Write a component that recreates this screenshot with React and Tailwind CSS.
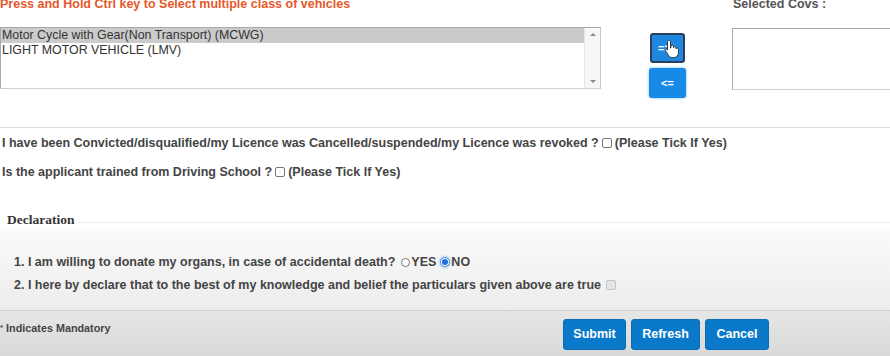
import React from "react";

function Hand() {
  return (
    <svg width="16" height="20" viewBox="0 0 16 20" className="absolute left-[12px] top-[4px]">
      <path
        d="M5 1.5c.9 0 1.5.6 1.5 1.5v6l.4-.1V7.5c0-.8.6-1.3 1.3-1.3s1.3.5 1.3 1.3v1.2c.1-.7.6-1.1 1.3-1.1.7 0 1.2.5 1.2 1.200v1c.2-.5.7-.8 1.2-.8.7 0 1.2.5 1.2 1.2V14c0 2.6-2 4.6-4.6 4.6H8.2c-1.5 0-2.6-.7-3.4-1.9L1.7 12c-.4-.6-.2-1.3.3-1.6.5-.4 1.2-.3 1.6.2l-.1.1L3.5 11V3c0-.9.6-1.5 1.5-1.5z"
        fill="#ffffff"
        stroke="#2b2b2b"
        strokeWidth="0.9"
      />
    </svg>
  );
}

export default function App() {
  return (
    <div
      className="w-[890px] h-[356px] overflow-hidden bg-white text-[#444] flex flex-col"
      style={{ fontFamily: '"Liberation Sans", Arial, sans-serif' }}
    >
      {/* top section */}
      <div className="flex h-[128px] border-b border-[#dcdcdc]">
        <div className="w-[601px] flex flex-col">
          <div className="mt-[-3px] h-[14px] leading-[14px] text-[12.5px] font-bold text-[#e5582b]">
            Press and Hold Ctrl key to Select multiple class of vehicles
          </div>
          <div className="mt-[16px] h-[62px] border border-[#a9a9a9] border-r-[#c8c8c8] border-b-[#d0d0d0] flex bg-white">
            <div className="flex-1 flex flex-col text-[12.4px] leading-[15px] text-[#333]">
              <div className="bg-[#cbcbcb] px-[1px]">Motor Cycle with Gear(Non Transport) (MCWG)</div>
              <div className="px-[1px]">LIGHT MOTOR VEHICLE (LMV)</div>
            </div>
            <div className="w-[16px] border-l border-[#e6e6e6] bg-[#f7f7f7] flex flex-col justify-between items-center py-[5px]">
              <div className="w-0 h-0 border-l-[3px] border-r-[3px] border-b-[3px] border-l-transparent border-r-transparent border-b-[#8a8a8a]" />
              <div className="w-0 h-0 border-l-[3px] border-r-[3px] border-t-[3px] border-l-transparent border-r-transparent border-t-[#8a8a8a]" />
            </div>
          </div>
        </div>
        <div className="ml-[48px] w-[37px] flex flex-col items-center pt-[33px] gap-[5px]">
          <div className="relative w-[35px] h-[30px] rounded-[3px] bg-[#1f87df] border-2 border-[#2d3f5c] flex items-center justify-center text-white text-[11px] font-bold">
            <span className="mr-[6px]">=&gt;</span>
            <Hand />
          </div>
          <div className="w-[37px] h-[30px] rounded-[3px] bg-[#178ae8] shadow-[0_0_3px_#6fc0ff] flex items-center justify-center text-white text-[11px] font-bold">
            &lt;=
          </div>
        </div>
        <div className="ml-[46px] flex-1 flex flex-col">
          <div className="mt-[-3px] h-[14px] leading-[14px] text-[12.5px] font-bold text-[#555] pl-[1px]">
            Selected Covs :
          </div>
          <div className="mt-[17px] h-[62px] border border-[#a9a9a9] border-b-[#d0d0d0] border-r-0 bg-white" />
        </div>
      </div>

      {/* questions */}
      <div className="flex flex-col text-[12.5px] font-bold text-[#444] pl-[2px]">
        <div className="h-[14px] leading-[14px] mt-[8px] flex items-center">
          <span>I have been Convicted/disqualified/my Licence was Cancelled/suspended/my Licence was revoked ?</span>
          <span className="mx-[3px] w-[10px] h-[10px] border border-[#777] rounded-[2px] bg-white inline-block" />
          <span>(Please Tick If Yes)</span>
        </div>
        <div className="h-[14px] leading-[14px] mt-[15px] flex items-center">
          <span>Is the applicant trained from Driving School ?</span>
          <span className="mx-[3px] w-[10px] h-[10px] border border-[#777] rounded-[2px] bg-white inline-block" />
          <span>(Please Tick If Yes)</span>
        </div>
      </div>

      {/* declaration */}
      <div className="mt-[33px] flex items-center pl-[7px] h-[16px]">
        <span
          className="text-[13.5px] font-bold text-[#333] leading-[16px]"
          style={{ fontFamily: '"Liberation Serif", "Times New Roman", serif' }}
        >
          Declaration
        </span>
        <div className="flex-1 ml-[4px] mt-[4px] h-[1px] bg-[#ececec]" />
      </div>
      <div className="flex-1 flex flex-col bg-gradient-to-b from-[#fbfbfb] to-[#ececec] pl-[14px] text-[12.5px] font-bold text-[#444] pt-[27px]">
        <div className="h-[14px] leading-[14px] flex items-center">
          <span>1. I am willing to donate my organs, in case of accidental death?</span>
          <span className="ml-[6px] w-[9px] h-[9px] rounded-full border border-[#777] bg-white inline-block" />
          <span className="ml-[1px]">YES</span>
          <span className="ml-[4px] w-[10px] h-[10px] rounded-full border border-[#4a90d9] bg-white inline-flex items-center justify-center shadow-[0_0_3px_#5aa0ff]">
            <span className="w-[6px] h-[6px] rounded-full bg-[#1a6fe0]" />
          </span>
          <span className="ml-[1px]">NO</span>
        </div>
        <div className="h-[14px] leading-[14px] mt-[9px] flex items-center">
          <span>2. I here by declare that to the best of my knowledge and belief the particulars given above are true</span>
          <span className="ml-[5px] w-[10px] h-[10px] border border-[#c4c4c4] rounded-[2px] bg-[#e4e4e4] inline-block" />
        </div>
      </div>

      {/* footer */}
      <div className="h-[46px] border-t border-[#d0d0d0] bg-gradient-to-b from-[#e6e6e6] to-[#d9d9d9] flex items-start">
        <div className="mt-[11px] text-[10.8px] leading-[12px] font-bold text-[#444] w-[563px]">
          <span className="align-top text-[8px]">*</span> Indicates Mandatory
        </div>
        <div className="mt-[8px] flex gap-[5px]">
          <button className="w-[63px] h-[31px] rounded-[3px] bg-[#0b79c9] border border-[#0a6cb3] text-white text-[12.5px] font-bold">
            Submit
          </button>
          <button className="w-[69px] h-[31px] rounded-[3px] bg-[#0b79c9] border border-[#0a6cb3] text-white text-[12.5px] font-bold">
            Refresh
          </button>
          <button className="w-[64px] h-[31px] rounded-[3px] bg-[#0b79c9] border border-[#0a6cb3] text-white text-[12.5px] font-bold">
            Cancel
          </button>
        </div>
      </div>
    </div>
  );
}
